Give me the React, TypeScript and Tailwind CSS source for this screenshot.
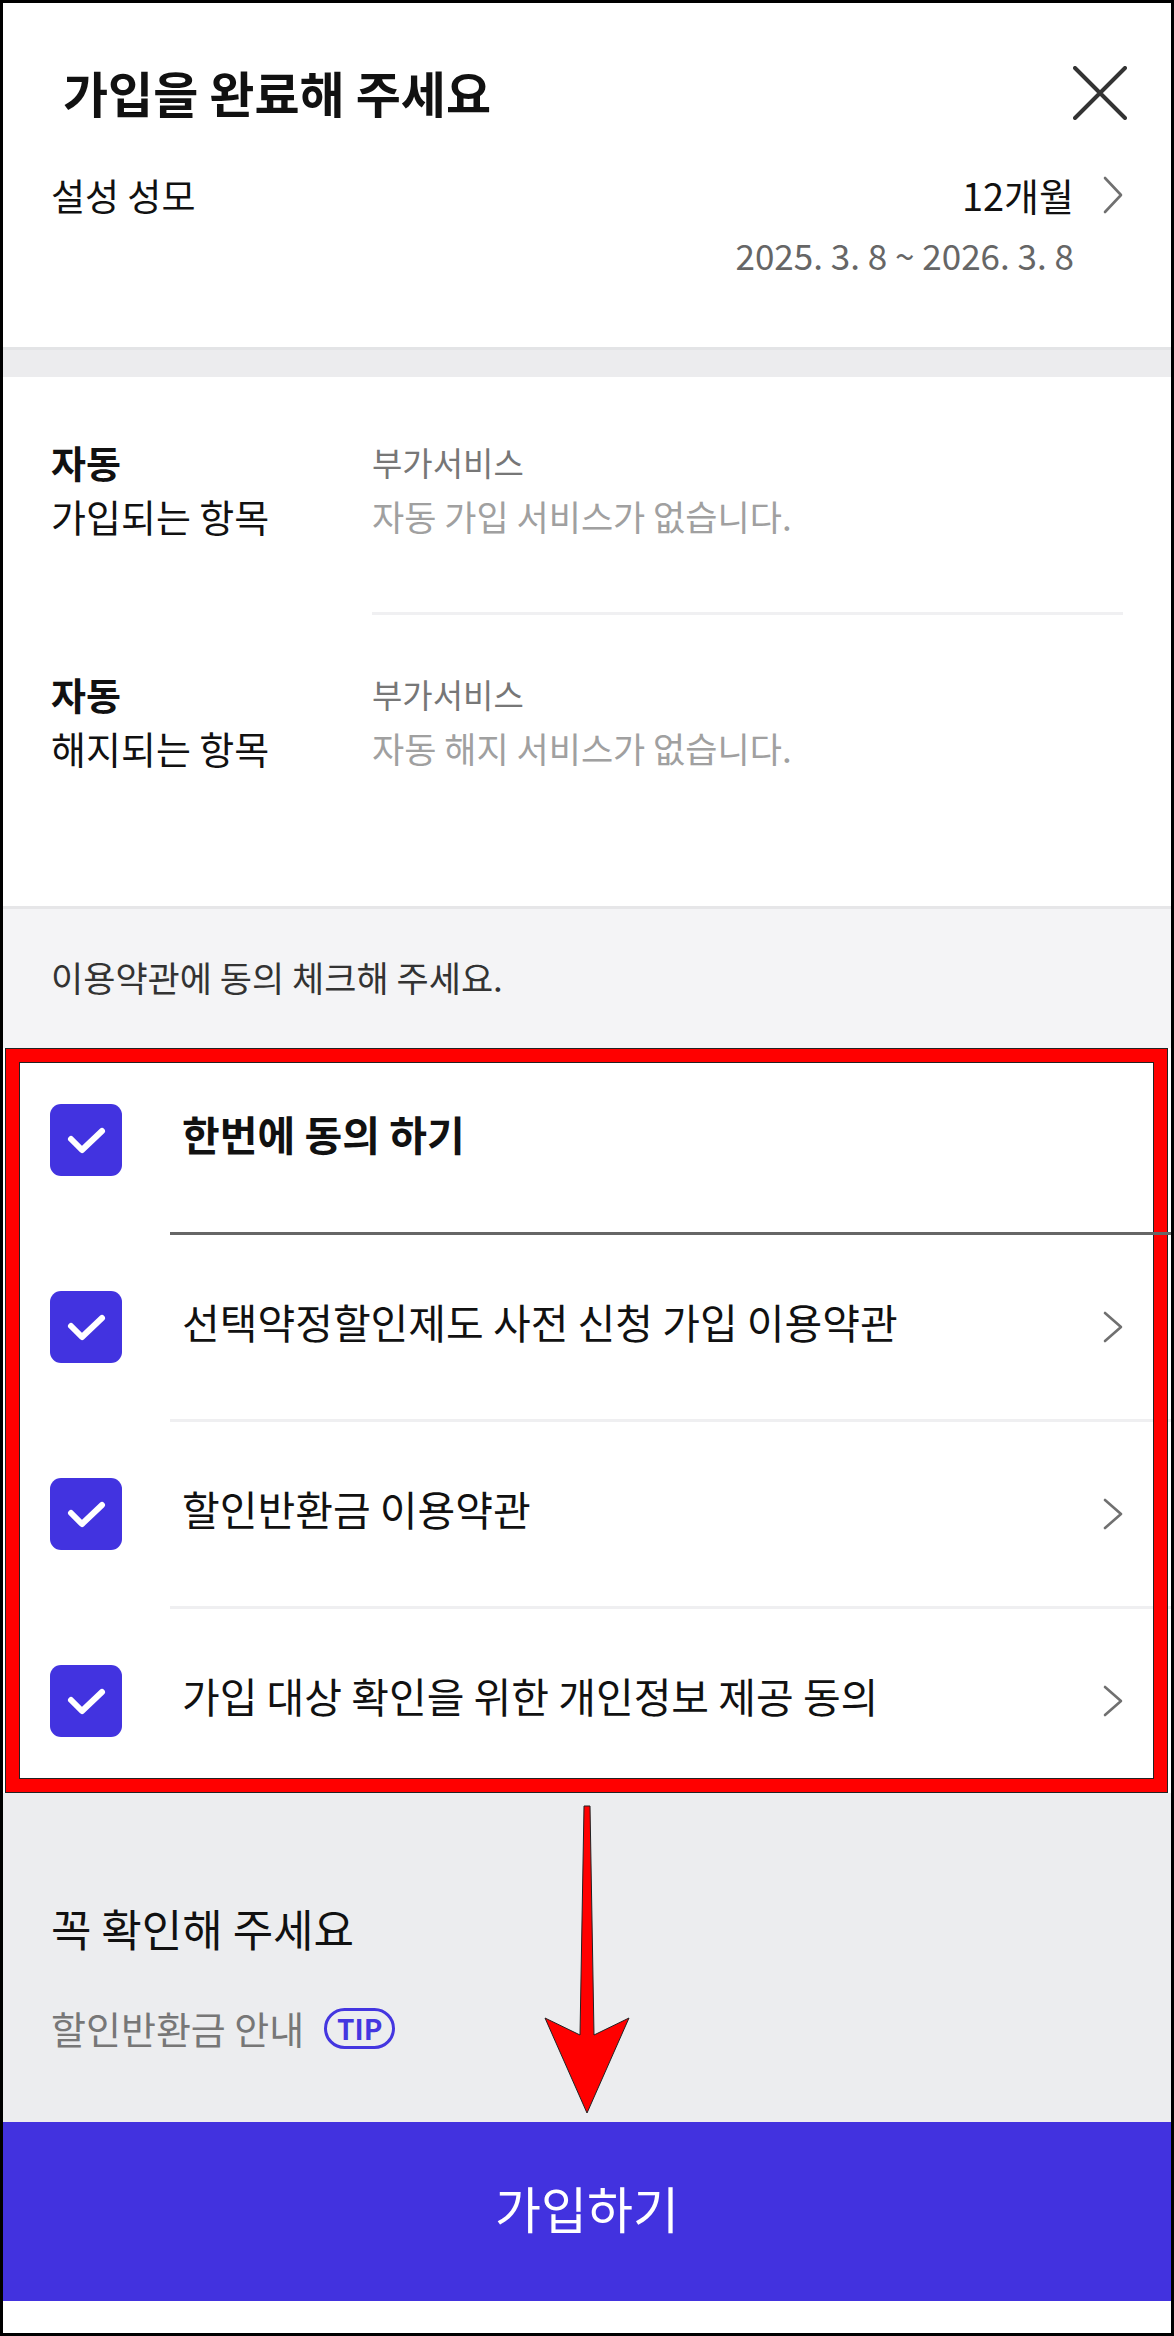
import React from 'react';

const FONT = "font-['Noto_Sans_CJK_KR','Noto_Sans',sans-serif]";

function Chevron({ h }: { h: number }) {
  return (
    <svg width="20" height={h} viewBox={`0 0 20 ${h}`} fill="none">
      <polyline
        points={`2,2 18,${h / 2} 2,${h - 2}`}
        stroke="#707070"
        strokeWidth="2.6"
        strokeLinecap="round"
        strokeLinejoin="round"
      />
    </svg>
  );
}

function CheckBox() {
  return (
    <div className="flex h-[72px] w-[72px] shrink-0 items-center justify-center rounded-[11px] bg-[#4233e0]">
      <svg width="72" height="72" viewBox="0 0 72 72" fill="none">
        <polyline
          points="21,35 32,46 52,27"
          stroke="#fff"
          strokeWidth="6"
          strokeLinecap="round"
          strokeLinejoin="round"
        />
      </svg>
    </div>
  );
}

const terms = [
  '선택약정할인제도 사전 신청 가입 이용약관',
  '할인반환금 이용약관',
  '가입 대상 확인을 위한 개인정보 제공 동의',
];

function InfoBlock({ label, desc }: { label: string; desc: string }) {
  return (
    <div className="flex">
      <div className="w-[321px] shrink-0 text-[38px] leading-[54px] text-[#111]">
        <p className="font-bold">자동</p>
        <p>{label}</p>
      </div>
      <div className="flex-1 leading-[54px]">
        <p className="text-[33px] text-[#777]">부가서비스</p>
        <p className="text-[35px] text-[#a0a0a0]">{desc}</p>
      </div>
    </div>
  );
}

export default function App() {
  return (
    <div className={`relative flex h-[2336px] w-[1174px] flex-col border-[3px] border-black bg-white ${FONT}`}>
      {/* 상단 */}
      <header className="h-[344px] px-[48px] pt-[57px]">
        <div className="flex h-[64px] items-center justify-between">
          <h1 className="pl-[12px] text-[49px] font-bold leading-[64px] text-[#111]">가입을 완료해 주세요</h1>
          <svg className="-mr-[4px] mt-[2px]" width="54" height="54" viewBox="0 0 54 54" fill="none">
            <path d="M2 2 52 52M52 2 2 52" stroke="#333" strokeWidth="4" strokeLinecap="round" />
          </svg>
        </div>
        <div className="mt-[47px] flex justify-between">
          <p className="text-[37px] leading-[48px] text-[#111]">설성 성모</p>
          <div className="flex flex-col items-end">
            <div className="flex h-[48px] items-center gap-[29px]">
              <span className="text-[38px] leading-[48px] text-[#111]">12개월</span>
              <Chevron h={38} />
            </div>
            <p className="mr-[49px] mt-[12px] text-[35px] leading-[48px] text-[#666]">2025. 3. 8 ~ 2026. 3. 8</p>
          </div>
        </div>
      </header>
      <div className="h-[3px] bg-[#e3e4e6]" />
      <div className="h-[27px] bg-[#ececee]" />

      {/* 자동 가입/해지 */}
      <section className="h-[529px] px-[48px] pt-[58px]">
        <InfoBlock label="가입되는 항목" desc="자동 가입 서비스가 없습니다." />
        <div className="mb-[52px] ml-[321px] mt-[69px] h-[3px] bg-[#f0f0f2]" />
        <InfoBlock label="해지되는 항목" desc="자동 해지 서비스가 없습니다." />
      </section>
      <div className="h-[3px] bg-[#e6e6e8]" />

      {/* 이용약관 */}
      <div className="h-[139px] bg-[#f4f4f6] pl-[48px] pt-[44px]">
        <p className="text-[35px] leading-[48px] text-[#333]">이용약관에 동의 체크해 주세요.</p>
      </div>
      <div className="bg-white">
        <div className="flex h-[184px] items-center pl-[47px] pr-[48px]">
          <CheckBox />
          <span className="mb-[14px] ml-[60px] text-[41px] font-bold leading-[56px] text-[#111]">한번에 동의 하기</span>
        </div>
        <div className="relative z-10 ml-[167px] h-[3px] bg-[#666]" />
        {terms.map((t, i) => (
          <div key={t}>
            {i > 0 && <div className="ml-[167px] h-[3px] bg-[#efeff1]" />}
            <div className="flex h-[184px] items-center pl-[47px] pr-[48px]">
              <CheckBox />
              <span className="mb-[12px] ml-[60px] flex-1 text-[41px] leading-[56px] text-[#111]">{t}</span>
              <Chevron h={32} />
            </div>
          </div>
        ))}
      </div>

      {/* 꼭 확인해 주세요 */}
      <div className="h-[329px] bg-[#ecedef] pl-[48px] pt-[105px]">
        <p className="text-[44px] leading-[60px] text-[#111]">꼭 확인해 주세요</p>
        <div className="mt-[46px] flex h-[48px] items-center gap-[20px]">
          <span className="text-[38px] leading-[48px] text-[#777]">할인반환금 안내</span>
          <span className="flex h-[41px] w-[71px] items-center justify-center rounded-full border-[3px] border-[#4436e0] text-[28px] font-bold leading-none text-[#4436e0]">
            TIP
          </span>
        </div>
      </div>

      <button className="flex h-[179px] items-center justify-center bg-[#4232df] pb-[8px] text-[50px] text-white">가입하기</button>
      <div className="h-[32px] bg-white" />

      {/* 빨간 표시 */}
      <div className="pointer-events-none absolute left-[3px] top-[1046px] h-[743px] w-[1161px] border-[13px] border-[#ff0000] shadow-[0_0_0_1px_#222,inset_0_0_0_1px_#222]" />
      <svg
        className="pointer-events-none absolute left-[537px] top-[1797px]"
        width="100"
        height="320"
        viewBox="540 1800 100 320"
      >
        <polygon
          points="584,1806 590,1806 594,2035 629,2018 587,2113 545,2018 580,2035"
          fill="#ff0000"
          stroke="#222"
          strokeWidth="1"
          strokeLinejoin="round"
        />
      </svg>
    </div>
  );
}
